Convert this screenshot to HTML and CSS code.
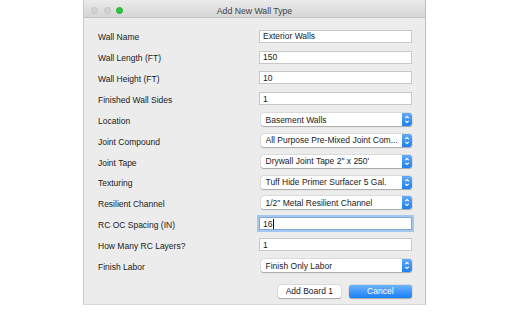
FILE: index.html
```html
<!DOCTYPE html>
<html>
<head>
<meta charset="utf-8">
<link rel="stylesheet" href="styles.css">
</head>
<body>
<div class="window">
  <div class="titlebar">
    <div class="lights">
      <span class="light off"></span>
      <span class="light off"></span>
      <span class="light green"></span>
    </div>
    <div class="title">Add New Wall Type</div>
  </div>
  <div class="content">
    <div class="form">
      <div class="label">Wall Name</div>
      <div class="field text">Exterior Walls</div>
      <div class="label">Wall Length (FT)</div>
      <div class="field text">150</div>
      <div class="label">Wall Height (FT)</div>
      <div class="field text">10</div>
      <div class="label">Finished Wall Sides</div>
      <div class="field text">1</div>
      <div class="label">Location</div>
      <div class="field popup"><span class="ptext">Basement Walls</span><span class="stepper"><svg viewBox="0 0 10 13" width="10" height="13"><path d="M3.3 5.2 L5 3.5 L6.7 5.2 M3.3 7.8 L5 9.5 L6.7 7.8" fill="none" stroke="#fff" stroke-width="1.1"/></svg></span></div>
      <div class="label">Joint Compound</div>
      <div class="field popup"><span class="ptext">All Purpose Pre-Mixed Joint Com...</span><span class="stepper"><svg viewBox="0 0 10 13" width="10" height="13"><path d="M3.3 5.2 L5 3.5 L6.7 5.2 M3.3 7.8 L5 9.5 L6.7 7.8" fill="none" stroke="#fff" stroke-width="1.1"/></svg></span></div>
      <div class="label">Joint Tape</div>
      <div class="field popup"><span class="ptext">Drywall Joint Tape 2" x 250'</span><span class="stepper"><svg viewBox="0 0 10 13" width="10" height="13"><path d="M3.3 5.2 L5 3.5 L6.7 5.2 M3.3 7.8 L5 9.5 L6.7 7.8" fill="none" stroke="#fff" stroke-width="1.1"/></svg></span></div>
      <div class="label">Texturing</div>
      <div class="field popup"><span class="ptext">Tuff Hide Primer Surfacer 5 Gal.</span><span class="stepper"><svg viewBox="0 0 10 13" width="10" height="13"><path d="M3.3 5.2 L5 3.5 L6.7 5.2 M3.3 7.8 L5 9.5 L6.7 7.8" fill="none" stroke="#fff" stroke-width="1.1"/></svg></span></div>
      <div class="label">Resilient Channel</div>
      <div class="field popup"><span class="ptext">1/2" Metal Resilient Channel</span><span class="stepper"><svg viewBox="0 0 10 13" width="10" height="13"><path d="M3.3 5.2 L5 3.5 L6.7 5.2 M3.3 7.8 L5 9.5 L6.7 7.8" fill="none" stroke="#fff" stroke-width="1.1"/></svg></span></div>
      <div class="label">RC OC Spacing (IN)</div>
      <div class="field text focused">16<span class="caret"></span></div>
      <div class="label">How Many RC Layers?</div>
      <div class="field text">1</div>
      <div class="label">Finish Labor</div>
      <div class="field popup"><span class="ptext">Finish Only Labor</span><span class="stepper"><svg viewBox="0 0 10 13" width="10" height="13"><path d="M3.3 5.2 L5 3.5 L6.7 5.2 M3.3 7.8 L5 9.5 L6.7 7.8" fill="none" stroke="#fff" stroke-width="1.1"/></svg></span></div>
    </div>
    <div class="buttons">
      <div class="btn">Add Board 1</div>
      <div class="btn primary">Cancel</div>
    </div>
  </div>
</div>
</body>
</html>
```

FILE: styles.css
```css
* { box-sizing: border-box; }
html, body { margin: 0; padding: 0; background: #ffffff; }
body {
  font-family: "Liberation Sans", Arial, sans-serif;
  font-size: 8.5px;
  color: #1a1a1a;
  width: 512px;
  height: 313px;
  overflow: hidden;
}
.window {
  margin-left: 83px;
  width: 343px;
  height: 305px;
  background: #ececec;
  border-left: 1px solid #c9c9c9;
  border-right: 1px solid #bdbdbd;
  border-bottom: 1px solid #d6d6d6;
  display: flex;
  flex-direction: column;
}
.titlebar {
  height: 18px;
  flex: none;
  position: relative;
  background: linear-gradient(#ebebeb, #d5d5d5);
  border-bottom: 1px solid #c2c2c2;
  display: flex;
  align-items: center;
  justify-content: center;
}
.lights {
  position: absolute;
  left: 7px;
  top: 7px;
  display: flex;
  gap: 5.5px;
}
.light {
  width: 7px;
  height: 7px;
  border-radius: 50%;
}
.light.off { background: #d3d3d3; border: 0.5px solid #c4c4c4; }
.light.green { background: #2bc840; border: 0.5px solid #24a935; }
.title {
  color: #444;
  font-size: 8.7px;
  padding-top: 4px;
}
.content {
  padding: 7.8px 13px 0 13px;
}
.form {
  display: grid;
  grid-template-columns: 162px 153px;
  grid-auto-rows: 20.85px;
  align-items: center;
}
.label {
  padding-top: 2.5px;
  padding-left: 1px;
}
.field {
  height: 13px;
  display: flex;
  align-items: center;
}
.text {
  background: #fff;
  border: 0.5px solid #c8c8c8;
  padding-left: 3px;
}
.text.focused {
  box-shadow: 0 0 0 2px #a4c7f0;
  border-color: #7fa8dc;
}
.caret {
  width: 0.8px;
  height: 10px;
  background: #000;
  margin-left: 0.5px;
}
.popup {
  margin-left: 1.5px;
  background: #fff;
  border-radius: 2.5px;
  box-shadow: 0 0.5px 1px rgba(0,0,0,0.25), 0 0 0 0.5px rgba(0,0,0,0.1);
  justify-content: space-between;
  padding-left: 5px;
  overflow: hidden;
}
.ptext { white-space: nowrap; overflow: hidden; }
.stepper {
  width: 10px;
  height: 13px;
  flex: none;
  background: linear-gradient(#62aaf7, #1f7ff3);
  border-radius: 0 2.5px 2.5px 0;
  display: flex;
}
.buttons {
  margin-top: 8.6px;
  display: flex;
  justify-content: flex-end;
  gap: 7.6px;
}
.btn {
  width: 63.4px;
  height: 13.3px;
  border-radius: 2.5px;
  background: #fff;
  box-shadow: 0 0.5px 1px rgba(0,0,0,0.25), 0 0 0 0.5px rgba(0,0,0,0.1);
  display: flex;
  align-items: center;
  justify-content: center;
}
.btn.primary {
  background: linear-gradient(#6cb2fa, #1a80f8);
  color: #fff;
}
```
